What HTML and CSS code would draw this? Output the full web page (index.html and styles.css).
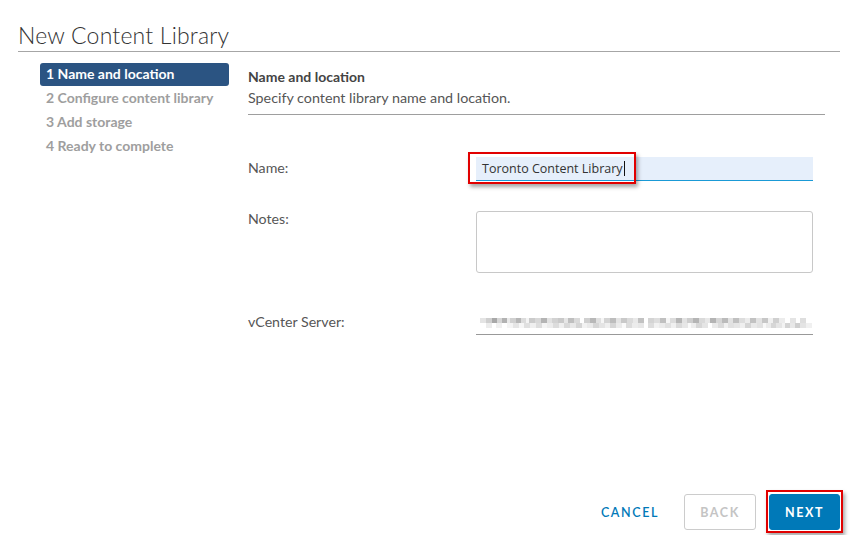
FILE: index.html
```html
<!DOCTYPE html>
<html>
<head>
<meta charset="utf-8">
<link rel="stylesheet" href="styles.css">
</head>
<body>
<div class="wizard">
  <div class="title">New Content Library</div>
  <div class="main">
    <nav class="steps">
      <div class="step active">1 Name and location</div>
      <div class="step">2 Configure content library</div>
      <div class="step">3 Add storage</div>
      <div class="step">4 Ready to complete</div>
    </nav>
    <section class="content">
      <div class="head">
        <div class="head-title">Name and location</div>
        <div class="head-sub">Specify content library name and location.</div>
      </div>
      <div class="form">
        <div class="row row-name">
          <div class="label">Name:</div>
          <div class="field">
            <div class="input">Toronto Content Library<span class="caret"></span></div>
            <div class="highlight hl-name"></div>
          </div>
        </div>
        <div class="row row-notes">
          <div class="label">Notes:</div>
          <div class="field"><div class="textarea"></div></div>
        </div>
        <div class="row row-vc">
          <div class="label">vCenter Server:</div>
          <div class="field"><div class="vc"><div class="blur"></div><div class="blur blur2"></div></div></div>
        </div>
      </div>
    </section>
  </div>
  <div class="footer">
    <button class="btn btn-link">CANCEL</button>
    <button class="btn btn-outline">BACK</button>
    <div class="next-wrap">
      <button class="btn btn-primary">NEXT</button>
      <div class="highlight hl-next"></div>
    </div>
  </div>
</div>
</body>
</html>
```
FILE: styles.css
```css
html, body { margin: 0; padding: 0; background: #fff; }
body { font-family: "Lato", "Open Sans", sans-serif; color: #565656; width: 860px; height: 535px; overflow: hidden; }
.wizard { position: relative; height: 535px; }
.title {
  margin-left: 18px; width: 822px; padding-top: 21px; height: 30px;
  font-size: 23px; font-weight: 300; color: #333; letter-spacing: 0.2px;
  border-bottom: 1px solid #a6a6a6; box-sizing: content-box;
}
.main { display: flex; margin-top: 11px; }
.steps { margin-left: 40px; width: 189px; display: flex; flex-direction: column; }
.step {
  height: 24px; line-height: 22px; padding-left: 6px;
  font-size: 14px; font-weight: 700; color: #9e9e9e;
}
.step.active { background: #2b5482; color: #fff; border-radius: 3px; height: 23px; margin-bottom: 1px; }
.content { margin-left: 19px; width: 577px; }
.head { border-bottom: 1px solid #9e9e9e; padding-top: 5px; box-sizing: border-box; height: 52px; }
.head-title { font-size: 14px; font-weight: 700; color: #444; line-height: 17px; }
.head-sub { font-size: 14.3px; color: #565656; line-height: 17px; margin-top: 4px; }
.form { padding-top: 42px; }
.row { display: grid; grid-template-columns: 228px 337px; }
.label { font-size: 14.2px; color: #565656; }
.field { position: relative; }
.row-name .label { padding-top: 2px; }
.input {
  height: 23px; background: #e6effb; border-bottom: 1px solid #1a9ad6;
  font-family: "Open Sans", sans-serif; font-size: 12.5px; color: #333; line-height: 23px; padding-left: 6px;
}
.caret { display: inline-block; width: 1px; height: 15px; background: #111; vertical-align: -3px; margin-left: 1px; }
.highlight { position: absolute; border: 2px solid #e10000; box-shadow: 2px 3px 4px rgba(0,0,0,0.35); pointer-events: none; }
.hl-name { left: -8px; top: -5px; width: 164px; height: 28px; }
.row-notes { margin-top: 30px; }
.row-notes .label { margin-top: -1px; }
.textarea { border: 1px solid #c8c8c8; border-radius: 3px; box-sizing: border-box; height: 62px; }
.row-vc { margin-top: 38px; }
.row-vc .label { padding-top: 2px; }
.vc { height: 23px; border-bottom: 1px solid #999; position: relative; }
.blur {
  position: absolute; left: 4px; top: 7px; width: 332px; height: 5px;
  background:
    linear-gradient(90deg,
      #e4e4e4 0 6px, #cfcfcf 6px 12px, #a8a8a8 12px 17px, #d6d6d6 17px 22px, #b2b2b2 22px 27px, #eaeaea 27px 30px,
      #d0d0d0 30px 36px, #b6b6b6 36px 41px, #dcdcdc 41px 46px, #f4f4f4 46px 49px, #cbcbcb 49px 55px, #d8d8d8 55px 61px,
      #b4b4b4 61px 67px, #e2e2e2 67px 72px, #d2d2d2 72px 78px, #c9c9c9 78px 84px, #e6e6e6 84px 88px, #bfbfbf 88px 94px,
      #dadada 94px 100px, #fff 100px 104px, #d0d0d0 104px 110px, #b8b8b8 110px 116px, #e0e0e0 116px 121px, #f6f6f6 121px 124px,
      #d4d4d4 124px 130px, #bdbdbd 130px 136px, #e4e4e4 136px 141px, #c9c9c9 141px 147px, #dbdbdb 147px 153px, #e9e9e9 153px 158px,
      #c2c2c2 158px 164px, #fff 164px 168px, #d4d4d4 168px 174px, #dedede 174px 180px, #c0c0c0 180px 186px, #f6f6f6 186px 190px,
      #dcdcdc 190px 196px, #b6b6b6 196px 202px, #e3e3e3 202px 207px, #cecece 207px 213px, #b5b5b5 213px 219px, #dadada 219px 225px,
      #e8e8e8 225px 230px, #b4b4b4 230px 236px, #d6d6d6 236px 242px, #bbbbbb 242px 248px, #e2e2e2 248px 253px, #c0c0c0 253px 259px,
      #dddddd 259px 265px, #ececec 265px 270px, #c2c2c2 270px 276px, #e3e3e3 276px 282px, #c7c7c7 282px 288px, #f0f0f0 288px 293px,
      #d0d0d0 293px 299px, #ececec 299px 305px, #fff 305px 310px, #e4e4e4 310px 316px, #fff 316px 320px, #dedede 320px 326px, #fff 326px 332px);
  filter: blur(0.5px);
}
.blur2 {
  top: 12px; opacity: 0.55; transform: scaleX(-1);
}
.footer {
  position: absolute; left: 0; right: 0; top: 494px;
  display: flex; justify-content: flex-end; align-items: center; padding-right: 20px;
}
.btn {
  font-family: "Lato", sans-serif; font-size: 12.5px; font-weight: 700; letter-spacing: 1.6px;
  height: 36px; border-radius: 3px; padding: 0; background: transparent; border: 1px solid transparent;
}
.btn-link { color: #0079b8; font-weight: 600; width: 70px; margin-right: 19px; }
.btn-outline { color: #c4c4c4; border-color: #cccccc; width: 72px; margin-right: 13px; }
.next-wrap { position: relative; }
.btn-primary { background: #0079b8; border-color: #0079b8; color: #fff; width: 71px; display: block; }
.hl-next { left: -3px; top: -4px; width: 73px; height: 39px; }
```
